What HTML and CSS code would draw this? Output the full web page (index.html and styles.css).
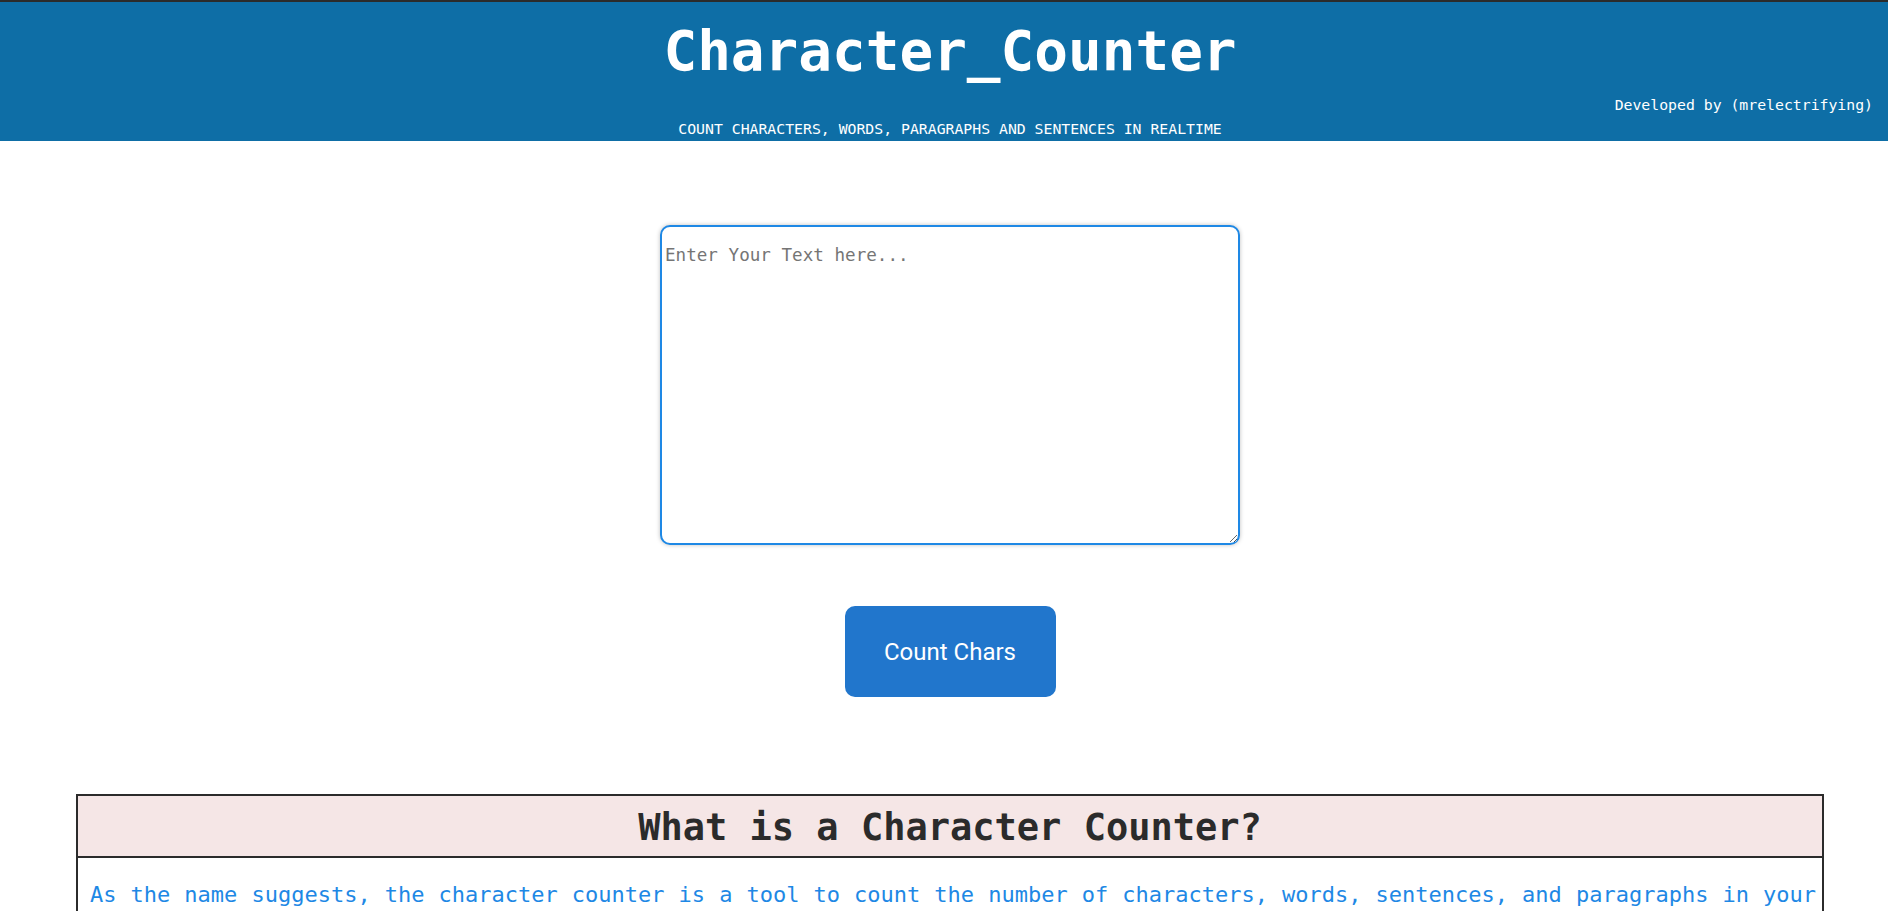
FILE: index.html
```html
<!DOCTYPE html>
<html lang="en">
<head>
<meta charset="utf-8">
<title>Character_Counter</title>
<link rel="stylesheet" href="styles.css">
</head>
<body>
<header class="site-header">
  <h1 class="site-title">Character_Counter</h1>
  <div class="dev-credit">Developed by (mrelectrifying)</div>
  <div class="tagline">COUNT CHARACTERS, WORDS, PARAGRAPHS AND SENTENCES IN REALTIME</div>
</header>
<main class="main">
  <textarea class="text-input" placeholder="Enter Your Text here..."></textarea>
  <div class="actions">
    <button class="count-btn" type="button">Count Chars</button>
  </div>
  <section class="info-box">
    <h2 class="info-title">What is a Character Counter?</h2>
    <p class="info-text">As the name suggests, the character counter is a tool to count the number of characters, words, sentences, and paragraphs in your text. It updates in realtime as you type, so you always know exactly how long your writing is.</p>
  </section>
</main>
</body>
</html>
```
FILE: styles.css
```css
html, body {
  margin: 0;
  padding: 0;
  background: #ffffff;
}

body {
  font-family: "DejaVu Sans Mono", "Liberation Mono", monospace;
  overflow: hidden;
}

.site-header {
  background: #0e6ea6;
  border-top: 2px solid #2b2b2b;
  padding: 16px 0 0 12px;
  color: #ffffff;
}

.site-title {
  margin: 0;
  text-align: center;
  font-size: 56px;
  line-height: 66px;
  font-weight: bold;
}

.dev-credit {
  margin-top: 9px;
  text-align: right;
  padding-right: 15px;
  font-size: 14.8px;
  line-height: 24px;
}

.tagline {
  text-align: center;
  font-size: 14.8px;
  line-height: 24px;
}

.main {
  padding-left: 12px;
}

.text-input {
  display: block;
  box-sizing: border-box;
  width: 580px;
  height: 320px;
  margin: 84px auto 0;
  padding: 18px 3px 2px 3px;
  border: 2px solid #1e88e5;
  border-radius: 10px;
  box-shadow: 0 0 4px rgba(0, 0, 0, 0.25);
  font-family: "DejaVu Sans Mono", "Liberation Mono", monospace;
  font-size: 17.6px;
  color: #333333;
  outline: none;
  resize: both;
}

.text-input::placeholder {
  color: #757575;
}

.actions {
  display: flex;
  justify-content: center;
  margin-top: 61px;
}

.count-btn {
  box-sizing: border-box;
  width: 211px;
  height: 91px;
  border: none;
  border-radius: 10px;
  background: #2176cc;
  color: #ffffff;
  font-family: Roboto, "Noto Sans", sans-serif;
  font-size: 24px;
  line-height: 28px;
  cursor: pointer;
}

.info-box {
  margin: 97px 64px 0 64px;
  border: 2px solid #2b2b2b;
}

.info-title {
  margin: 0;
  padding-top: 4px;
  background: #f5e6e6;
  border-bottom: 2px solid #2b2b2b;
  text-align: center;
  font-size: 37px;
  line-height: 56px;
  font-weight: bold;
  color: #2b2b2b;
}

.info-text {
  margin: 24px 0;
  padding: 0 6px 0 12px;
  font-size: 22px;
  line-height: 26px;
  color: #1e88e5;
  text-align: justify;
}
```
